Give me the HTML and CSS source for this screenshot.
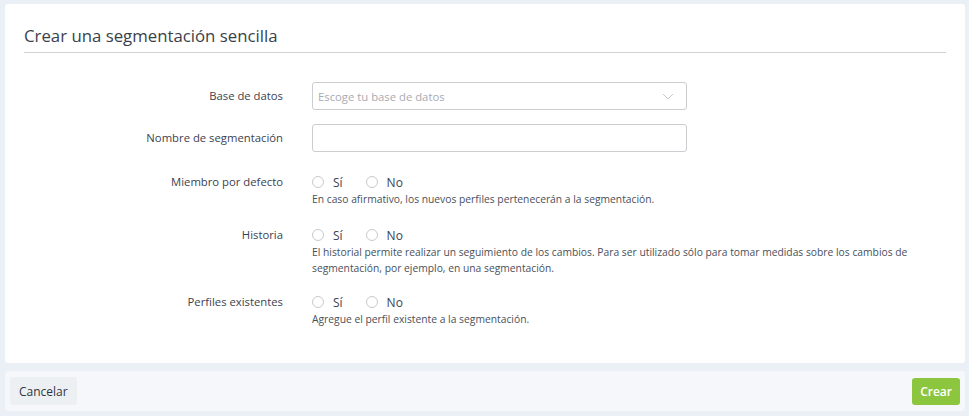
FILE: index.html
```html
<!DOCTYPE html>
<html lang="es">
<head>
<meta charset="utf-8">
<link rel="stylesheet" href="styles.css">
</head>
<body>
<div class="page">
  <div class="card">
    <h1 class="title">Crear una segmentación sencilla</h1>
    <div class="form">
      <div class="row row-input">
        <label class="label">Base de datos</label>
        <div class="field">
          <div class="select">
            <span class="placeholder">Escoge tu base de datos</span>
            <svg class="chev" width="12" height="7" viewBox="0 0 12 7"><path d="M1 1 L6 6 L11 1" fill="none" stroke="#c4c8cf" stroke-width="1"/></svg>
          </div>
        </div>
      </div>
      <div class="row row-input">
        <label class="label">Nombre de segmentación</label>
        <div class="field"><div class="input"></div></div>
      </div>
      <div class="row row-radio">
        <label class="label">Miembro por defecto</label>
        <div class="field">
          <div class="radios">
            <span class="radio"><span class="circle"></span>Sí</span>
            <span class="radio"><span class="circle"></span>No</span>
          </div>
          <p class="help">En caso afirmativo, los nuevos perfiles pertenecerán a la segmentación.</p>
        </div>
      </div>
      <div class="row row-radio row-tight">
        <label class="label">Historia</label>
        <div class="field">
          <div class="radios">
            <span class="radio"><span class="circle"></span>Sí</span>
            <span class="radio"><span class="circle"></span>No</span>
          </div>
          <p class="help">El historial permite realizar un seguimiento de los cambios. Para ser utilizado sólo para tomar medidas sobre los cambios de segmentación, por ejemplo, en una segmentación.</p>
        </div>
      </div>
      <div class="row row-radio">
        <label class="label">Perfiles existentes</label>
        <div class="field">
          <div class="radios">
            <span class="radio"><span class="circle"></span>Sí</span>
            <span class="radio"><span class="circle"></span>No</span>
          </div>
          <p class="help">Agregue el perfil existente a la segmentación.</p>
        </div>
      </div>
    </div>
  </div>
  <div class="footer">
    <button class="btn btn-cancel">Cancelar</button>
    <button class="btn btn-create">Crear</button>
  </div>
</div>
</body>
</html>
```
FILE: styles.css
```css
* { box-sizing: border-box; }
html, body { margin: 0; padding: 0; }
body {
  background: #ebeff6;
  font-family: "Open Sans", "Noto Sans", sans-serif;
  color: #3c4250;
}
.page {
  padding: 4px 4px 5px 5px;
  display: flex;
  flex-direction: column;
  gap: 8px;
}
.card {
  background: #fff;
  border-radius: 3px;
  padding: 21px 19px 23px 19px;
  height: 359px;
}
.title {
  margin: 0;
  font-size: 16.8px;
  font-weight: 400;
  line-height: 22px;
  color: #3a3f4c;
  padding-bottom: 5px;
  border-bottom: 1px solid #cfd1d5;
}
.form {
  padding-top: 29px;
  display: flex;
  flex-direction: column;
}
.row {
  display: grid;
  grid-template-columns: 259px 375px;
  column-gap: 29px;
}
.label {
  text-align: right;
  font-size: 11.3px;
  color: #3c4250;
}
.row-input { margin-bottom: 14px; }
.row-input:nth-child(2) { margin-bottom: 22px; }
.row-input .label { line-height: 28px; }
.select, .input {
  height: 28px;
  border: 1px solid #cbcdd1;
  border-radius: 3px;
  background: #fff;
}
.select {
  display: flex;
  align-items: center;
  justify-content: space-between;
  padding: 0 12px 0 5px;
}
.placeholder {
  font-size: 11.3px;
  color: #a7abb3;
}
.chev { display: block; }
.row-radio { margin-bottom: 20px; }
.row-radio.row-tight { margin-bottom: 18px; }
.row-radio .label { line-height: 16px; }
.row-radio .field { width: 620px; }
.radios {
  display: flex;
  gap: 23px;
  height: 16px;
  align-items: center;
}
.radio {
  display: flex;
  align-items: center;
  gap: 9px;
  font-size: 12px;
  color: #3c4250;
}
.circle {
  width: 12px;
  height: 12px;
  border: 1px solid #c6c9ce;
  border-radius: 50%;
  background: #fff;
}
.help {
  margin: 1px 0 0 0;
  font-size: 10.3px;
  line-height: 16px;
  color: #4a4f5a;
}
.footer {
  background: #f5f7fb;
  border-radius: 3px;
  height: 40px;
  display: flex;
  align-items: center;
  justify-content: space-between;
  padding: 0 5px;
}
.btn {
  border: none;
  border-radius: 3px;
  font-family: "Open Sans", "Noto Sans", sans-serif;
  font-size: 12px;
  height: 28px;
  padding: 0 9px;
  cursor: pointer;
}
.btn-cancel {
  background: #edf0f3;
  color: #2f3542;
}
.btn-create {
  background: #8cc63f;
  color: #fff;
  height: 27px;
  padding: 0 8px;
  font-weight: 600;
}
```
